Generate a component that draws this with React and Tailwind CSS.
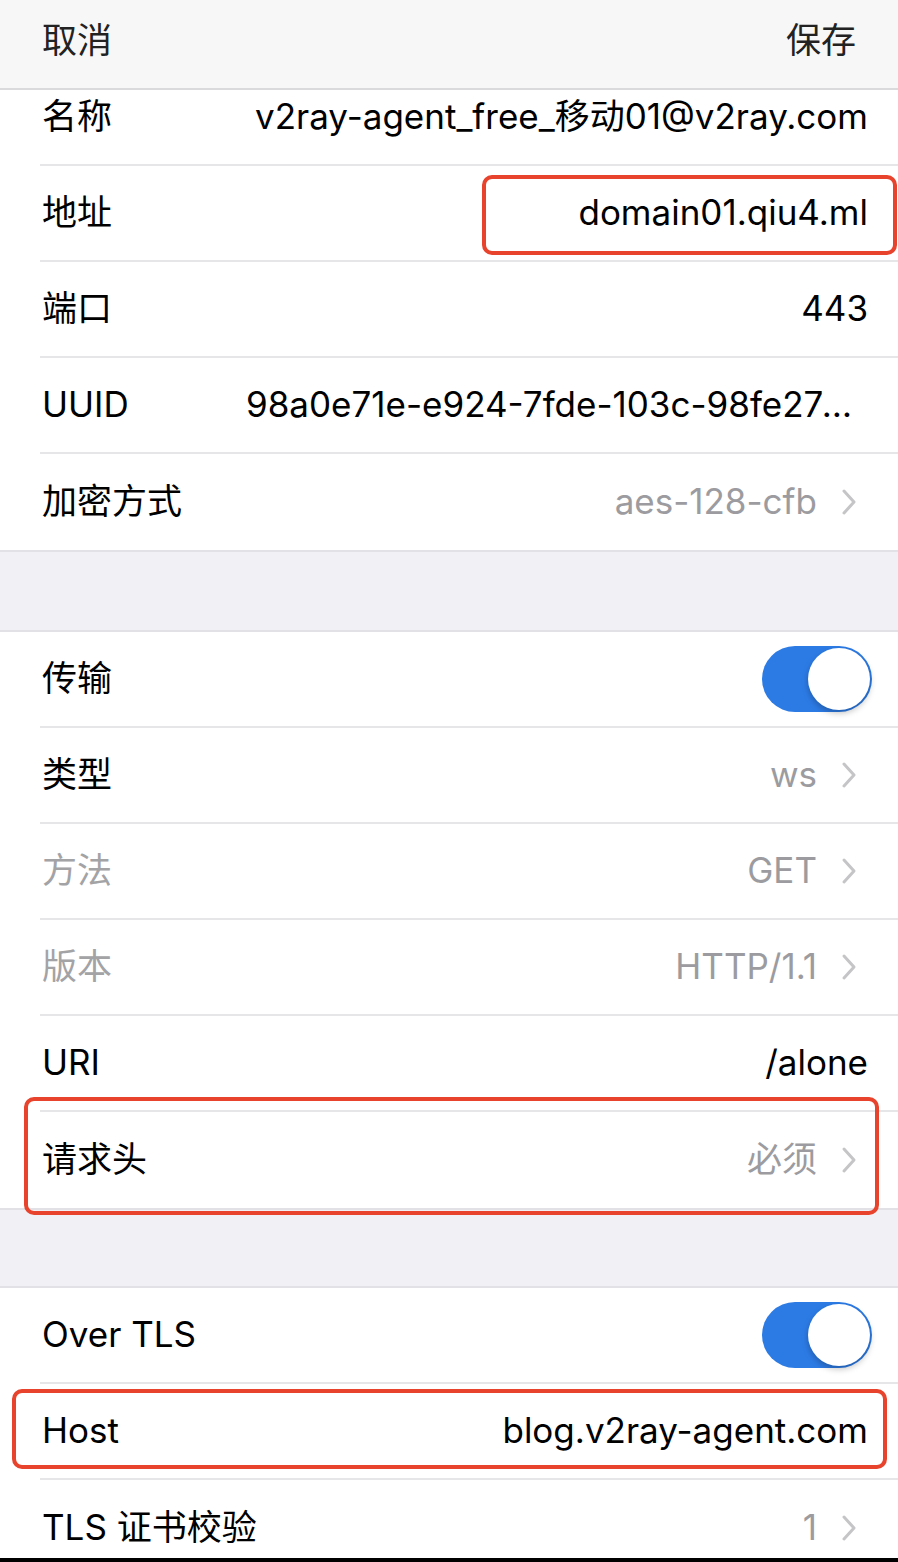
import React from 'react';

const font = { fontFamily: '"Inter", "Noto Sans CJK SC", sans-serif' };

function Chevron() {
  return (
    <svg width="16" height="28" viewBox="0 0 16 28" className="ml-[24px] mr-[11px] shrink-0">
      <polyline points="3,3 13,14 3,25" fill="none" stroke="#c5c5c8" strokeWidth="3" strokeLinecap="round" strokeLinejoin="round" />
    </svg>
  );
}

function Toggle() {
  return (
    <div className="w-[110px] h-[66px] rounded-full bg-[#2c7be5] flex items-center justify-end pr-[2px] mr-[-4px]">
      <div className="w-[62px] h-[62px] rounded-full bg-white shadow-[0_3px_6px_rgba(0,0,0,0.25)]" />
    </div>
  );
}

function Row({ label, value, chevron, toggle, dim, last, first, valueGray, labelW }) {
  return (
    <div className="pl-[40px] bg-white">
      <div
        className={
          'flex items-center pr-[30px] ' +
          (first ? 'h-[76px] pb-[20px] ' : 'h-[96px] ') +
          (last ? '' : 'border-b-2 border-[#e6e6e9]')
        }
      >
        <span className={'shrink-0 pl-[2px] ' + (dim ? 'text-[#a3a3a6]' : 'text-black')} style={{ minWidth: labelW || 0 }}>
          {label}
        </span>
        <span className={'flex-1 min-w-0 truncate text-right py-[4px] ' + (valueGray ? 'text-[#9c9ca0]' : 'text-black')}>
          {value}
        </span>
        {chevron && <Chevron />}
        {toggle && <Toggle />}
      </div>
    </div>
  );
}

export default function App() {
  return (
    <div className="relative w-[898px] h-[1562px] bg-[#f0f0f5] overflow-hidden text-[35px] leading-[1.3]" style={font}>
      <div className="h-[90px] bg-[#f7f7f7] border-b-2 border-[#dadadc] flex items-center justify-between px-[42px] pb-[6px] text-[#222]">
        <span>取消</span>
        <span>保存</span>
      </div>

      <div className="border-b-2 border-[#e2e2e6]">
        <Row first label="名称" value="v2ray-agent_free_移动01@v2ray.com" labelW="206px" />
        <Row label="地址" value="domain01.qiu4.ml" />
        <Row label="端口" value="443" />
        <Row label="UUID" value="98a0e71e-e924-7fde-103c-98fe27a5c1d0" labelW="206px" />
        <Row last label="加密方式" value="aes-128-cfb" valueGray chevron />
      </div>

      <div className="h-[78px]" />

      <div className="border-y-2 border-[#e2e2e6]">
        <Row label="传输" toggle />
        <Row label="类型" value="ws" valueGray chevron />
        <Row dim label="方法" value="GET" valueGray chevron />
        <Row dim label="版本" value="HTTP/1.1" valueGray chevron />
        <Row label="URI" value="/alone" />
        <Row last label="请求头" value="必须" valueGray chevron />
      </div>

      <div className="h-[76px]" />

      <div className="border-t-2 border-[#e2e2e6]">
        <Row label="Over TLS" toggle />
        <Row label="Host" value="blog.v2ray-agent.com" />
        <Row last label="TLS 证书校验" value="1" valueGray chevron />
      </div>

      <div className="absolute left-0 right-0 bottom-0 h-[4px] bg-black" />

      <div className="absolute left-[482px] top-[175px] w-[415px] h-[80px] border-[4px] border-[#e8442d] rounded-[10px]" />
      <div className="absolute left-[24px] top-[1097px] w-[855px] h-[118px] border-[4px] border-[#e8442d] rounded-[10px]" />
      <div className="absolute left-[12px] top-[1389px] w-[875px] h-[80px] border-[4px] border-[#e8442d] rounded-[10px]" />
    </div>
  );
}
